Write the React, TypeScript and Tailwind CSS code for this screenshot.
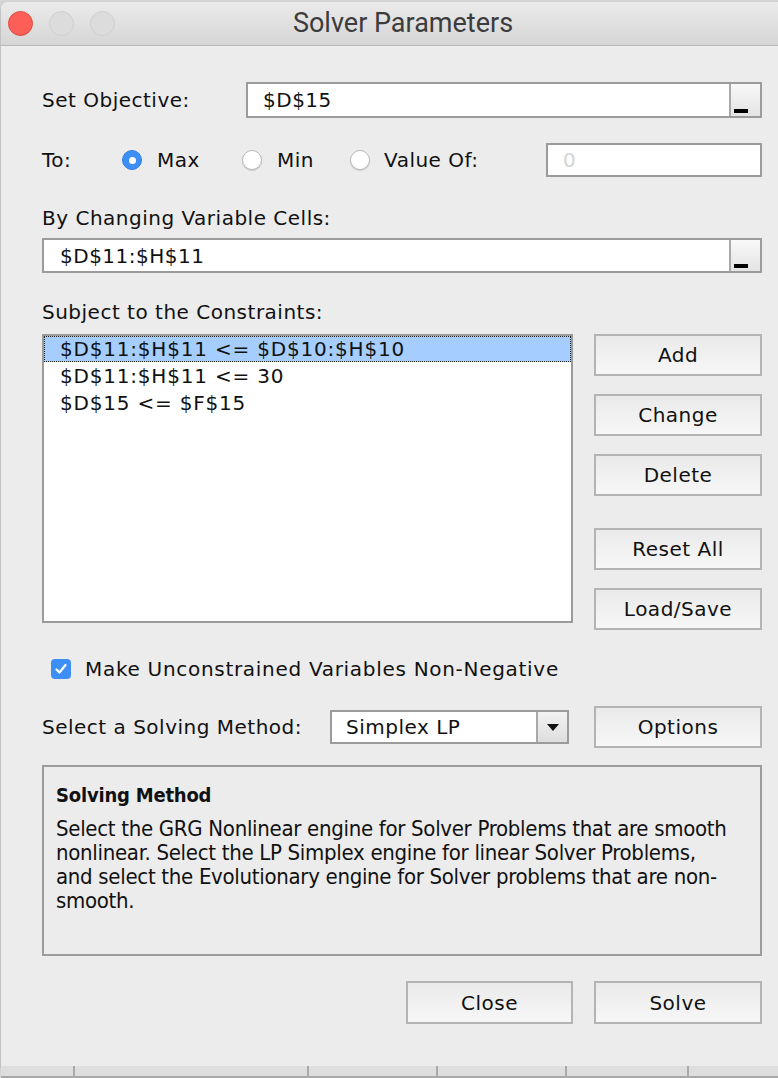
import { FC, ReactNode } from "react";

const label = "font-['DejaVu_Sans',sans-serif] text-[20px] text-[#111] leading-none tracking-[0.5px]";

const PickerButton: FC = () => (
  <div className="w-[31px] h-full border-l-2 border-[#a9a9a9] bg-gradient-to-b from-[#f8f8f8] to-[#e4e4e4] flex items-end pl-[3px] pb-[3px]">
    <div className="w-[14px] h-[4px] bg-black" />
  </div>
);

const Radio: FC<{ checked?: boolean }> = ({ checked }) =>
  checked ? (
    <div className="w-[20px] h-[20px] rounded-full bg-[#3d8ff6] border border-[#2f7fe8] flex items-center justify-center">
      <div className="w-[7px] h-[7px] rounded-full bg-white" />
    </div>
  ) : (
    <div className="w-[20px] h-[20px] rounded-full bg-white border border-[#b9b9b9] shadow-[0_1px_1px_rgba(0,0,0,0.15)]" />
  );

const Btn: FC<{ children: ReactNode; className?: string }> = ({ children, className }) => (
  <div
    className={
      "w-[168px] h-[42px] border-2 border-[#b4b4b4] bg-gradient-to-b from-[#eaeaea] to-[#f7f7f7] flex items-center justify-center " +
      label +
      " " +
      (className ?? "")
    }
  >
    {children}
  </div>
);

const App: FC = () => {
  return (
    <div className="w-[778px] h-[1078px] overflow-hidden bg-[#d9d9d9] pl-[1px] pt-[2px] flex flex-col">
      <div className="w-[802px] h-[1064px] shrink-0 bg-[#ececec] rounded-t-[7px] shadow-[0_3px_6px_rgba(0,0,0,0.25)] flex flex-col">
        {/* title bar */}
        <div className="h-[44px] shrink-0 rounded-t-[7px] border-b border-[#b9b9b9] bg-gradient-to-b from-[#ebebeb] to-[#d5d5d5] flex items-center">
          <div className="flex items-center gap-[16px] pl-[7px]">
            <div className="w-[25px] h-[25px] rounded-full bg-[#fc5f57] border border-[#e14a42]" />
            <div className="w-[25px] h-[25px] rounded-full bg-[#dcdcdc] border border-[#cfcfcf]" />
            <div className="w-[25px] h-[25px] rounded-full bg-[#dcdcdc] border border-[#cfcfcf]" />
          </div>
          <div className="flex-1 text-center pr-[112px] font-['Roboto',sans-serif] text-[27px] text-[#3c3c3c] leading-none">
            Solver Parameters
          </div>
        </div>

        <div className="pl-[41px] w-[761px] flex flex-col">
          {/* objective */}
          <div className="mt-[36px] h-[36px] flex items-center">
            <div className={"w-[204px] " + label}>Set Objective:</div>
            <div className="w-[516px] h-full border-2 border-[#9b9b9b] bg-white flex items-center">
              <div className={"flex-1 pl-[15px] " + label}>$D$15</div>
              <PickerButton />
            </div>
          </div>

          {/* to */}
          <div className="mt-[25px] h-[34px] flex items-center">
            <div className={"w-[80px] " + label}>To:</div>
            <div className="w-[120px] flex items-center gap-[15px]">
              <Radio checked />
              <span className={label}>Max</span>
            </div>
            <div className="w-[108px] flex items-center gap-[15px]">
              <Radio />
              <span className={label}>Min</span>
            </div>
            <div className="flex items-center gap-[14px]">
              <Radio />
              <span className={label}>Value Of:</span>
            </div>
            <div className="ml-auto w-[216px] h-full border-2 border-[#9b9b9b] bg-white flex items-center pl-[15px]">
              <span className={label + " !text-[#d4d4d4]"}>0</span>
            </div>
          </div>

          {/* changing cells */}
          <div className={"mt-[29px] h-[24px] flex items-center " + label}>By Changing Variable Cells:</div>
          <div className="mt-[8px] w-[720px] h-[35px] border-2 border-[#9b9b9b] bg-white flex items-center">
            <div className={"flex-1 pl-[16px] " + label}>$D$11:$H$11</div>
            <PickerButton />
          </div>

          {/* constraints */}
          <div className={"mt-[27px] h-[24px] flex items-center " + label}>Subject to the Constraints:</div>
          <div className="mt-[10px] flex gap-[21px]">
            <div className="w-[531px] h-[289px] border-2 border-[#9b9b9b] bg-white flex flex-col">
              <div className="h-[26px] bg-[#a5cdfd] border border-dotted border-[#222] flex items-center pl-[15px]">
                <span className={label + " !tracking-[0.8px]"}>$D$11:$H$11 &lt;= $D$10:$H$10</span>
              </div>
              <div className="h-[27px] flex items-center pl-[16px]">
                <span className={label + " !tracking-[0.8px]"}>$D$11:$H$11 &lt;= 30</span>
              </div>
              <div className="h-[27px] flex items-center pl-[16px]">
                <span className={label + " !tracking-[0.8px]"}>$D$15 &lt;= $F$15</span>
              </div>
            </div>
            <div className="flex flex-col">
              <Btn>Add</Btn>
              <Btn className="mt-[18px]">Change</Btn>
              <Btn className="mt-[18px]">Delete</Btn>
              <Btn className="mt-[32px]">Reset All</Btn>
              <Btn className="mt-[18px]">Load/Save</Btn>
            </div>
          </div>

          {/* non-negative */}
          <div className="mt-[27px] h-[24px] flex items-center pl-[9px] gap-[14px]">
            <div className="w-[20px] h-[20px] rounded-[4px] bg-[#3d8ff6] flex items-center justify-center">
              <svg width="14" height="14" viewBox="0 0 14 14" fill="none">
                <path d="M2.5 7.5 L5.5 10.5 L11.5 3" stroke="white" strokeWidth="2.2" strokeLinecap="round" strokeLinejoin="round" />
              </svg>
            </div>
            <span className={label + " !tracking-[0.7px]"}>Make Unconstrained Variables Non-Negative</span>
          </div>

          {/* method */}
          <div className="mt-[25px] h-[42px] flex items-center">
            <div className={"w-[288px] " + label}>Select a Solving Method:</div>
            <div className="w-[239px] h-[34px] border-2 border-[#9b9b9b] bg-white flex items-center">
              <div className={"flex-1 pl-[14px] " + label}>Simplex LP</div>
              <div className="w-[31px] h-full border-l-2 border-[#a9a9a9] bg-gradient-to-b from-[#f2f2f2] to-[#dedede] flex items-center justify-center">
                <svg width="14" height="9" viewBox="0 0 14 9">
                  <path d="M1 1 H13 L7 8 Z" fill="#111" />
                </svg>
              </div>
            </div>
            <Btn className="ml-auto">Options</Btn>
          </div>

          {/* description */}
          <div className="mt-[17px] w-[720px] h-[191px] border-2 border-[#9b9b9b] px-[12px] pt-[16px] font-['DejaVu_Sans_Condensed','DejaVu_Sans',sans-serif] font-stretch-condensed text-[#111] whitespace-nowrap">
            <div className="text-[20px] font-bold leading-[24px] tracking-[-0.2px]">Solving Method</div>
            <p className="mt-[10px] text-[22px] leading-[24px] tracking-[-0.3px]">
              Select the GRG Nonlinear engine for Solver Problems that are smooth
              <br />
              nonlinear. Select the LP Simplex engine for linear Solver Problems,
              <br />
              and select the Evolutionary engine for Solver problems that are non-
              <br />
              smooth.
            </p>
          </div>

          {/* footer */}
          <div className="mt-[25px] flex justify-end gap-[21px]">
            <Btn className="!w-[167px] !h-[43px]">Close</Btn>
            <Btn className="!h-[43px]">Solve</Btn>
          </div>
        </div>
      </div>
      {/* sheet peeking below the dialog */}
      <div className="flex-1 flex border-b-2 border-[#a9a9a9] bg-[#dedede]">
        <div className="w-[74px] border-r-2 border-[#a9a9a9]" />
        <div className="w-[234px] border-r-2 border-[#a9a9a9]" />
        <div className="w-[129px] border-r-2 border-[#a9a9a9]" />
        <div className="w-[129px] border-r-2 border-[#a9a9a9]" />
        <div className="w-[122px] border-r-2 border-[#a9a9a9]" />
      </div>
    </div>
  );
};

export default App;
